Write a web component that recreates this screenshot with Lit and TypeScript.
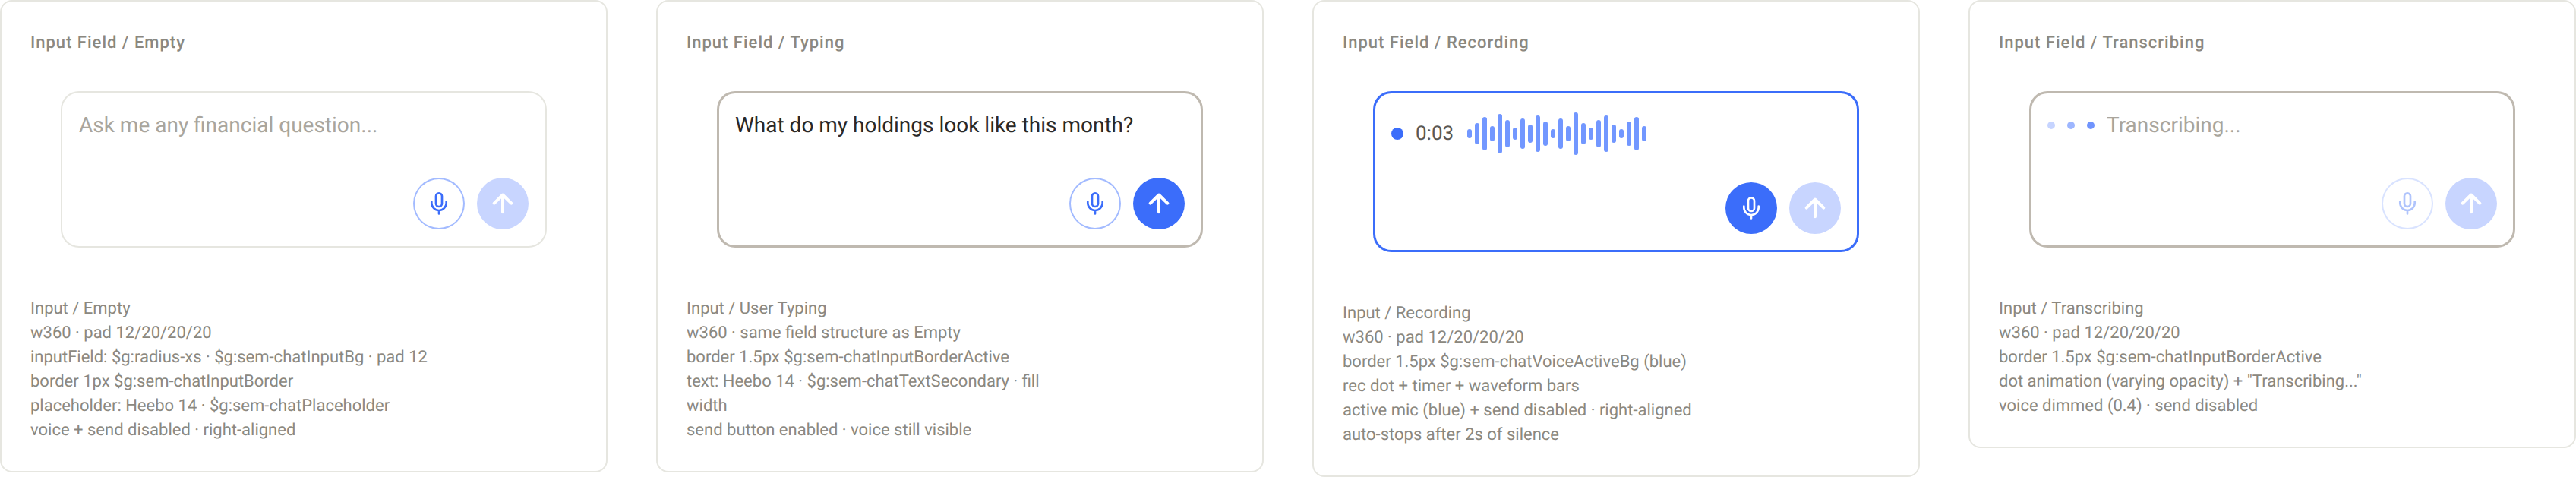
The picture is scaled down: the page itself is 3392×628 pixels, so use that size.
import { LitElement, html, css, svg } from "lit";
import { customElement, property } from "lit/decorators.js";
import { classMap } from "lit/directives/class-map.js";

type FieldState = "empty" | "typing" | "recording" | "transcribing";

interface Spec {
  state: FieldState;
  title: string;
  notes: string[];
}

const SPECS: Spec[] = [
  {
    state: "empty",
    title: "Input Field / Empty",
    notes: [
      "Input / Empty",
      "w360 · pad 12/20/20/20",
      "inputField: $g:radius-xs · $g:sem-chatInputBg · pad 12",
      "border 1px $g:sem-chatInputBorder",
      "placeholder: Heebo 14 · $g:sem-chatPlaceholder",
      "voice + send disabled · right-aligned",
    ],
  },
  {
    state: "typing",
    title: "Input Field / Typing",
    notes: [
      "Input / User Typing",
      "w360 · same field structure as Empty",
      "border 1.5px $g:sem-chatInputBorderActive",
      "text: Heebo 14 · $g:sem-chatTextSecondary · fill\nwidth",
      "send button enabled · voice still visible",
    ],
  },
  {
    state: "recording",
    title: "Input Field / Recording",
    notes: [
      "Input / Recording",
      "w360 · pad 12/20/20/20",
      "border 1.5px $g:sem-chatVoiceActiveBg (blue)",
      "rec dot + timer + waveform bars",
      "active mic (blue) + send disabled · right-aligned",
      "auto-stops after 2s of silence",
    ],
  },
  {
    state: "transcribing",
    title: "Input Field / Transcribing",
    notes: [
      "Input / Transcribing",
      "w360 · pad 12/20/20/20",
      "border 1.5px $g:sem-chatInputBorderActive",
      'dot animation (varying opacity) + "Transcribing..."',
      "voice dimmed (0.4) · send disabled",
    ],
  },
];

const WAVE = [12, 28, 44, 20, 52, 36, 16, 40, 24, 48, 32, 12, 40, 20, 56, 28, 16, 36, 48, 24, 12, 32, 44, 20];

const micIcon = svg`
  <svg class="icon" viewBox="0 0 32 32" aria-hidden="true">
    <rect x="12" y="2.3" width="8" height="17.7" rx="4"></rect>
    <path d="M6.3 13.6v1.7a9.7 9.7 0 0 0 19.4 0v-1.7M16 25v4.4"></path>
  </svg>`;

const arrowIcon = svg`
  <svg class="icon arrow" viewBox="0 0 32 32" aria-hidden="true">
    <path d="M16 27.3V4.5M4.7 15.7L16 4.5l11.3 11.2"></path>
  </svg>`;

@customElement("chat-input")
export class ChatInput extends LitElement {
  @property() state: FieldState = "empty";

  static styles = css`
    :host {
      display: block;
    }
    .field {
      box-sizing: border-box;
      display: flex;
      flex-direction: column;
      gap: 32px;
      padding: 24px;
      border-radius: 24px;
      background: #ffffff;
      box-shadow: inset 0 0 0 2px #e6e6e0;
    }
    .field.active {
      box-shadow: inset 0 0 0 3px #bfb9b0;
    }
    .field.recording {
      box-shadow: inset 0 0 0 3px #3b6dfa;
    }
    .body {
      display: flex;
      align-items: flex-start;
      min-height: 58px;
    }
    .text {
      display: block;
      flex: 1;
      min-width: 0;
      box-sizing: border-box;
      height: 42px;
      margin: 0;
      padding: 0;
      border: 0;
      outline: 0;
      background: none;
      font: 400 28px/42px Roboto, sans-serif;
      text-rendering: geometricPrecision;
      color: #2a2826;
    }
    .text::placeholder {
      color: #a9a59c;
      opacity: 1;
    }
    .status {
      display: flex;
      align-items: center;
      gap: 16px;
      height: 42px;
      font: 400 28px/42px Roboto, sans-serif;
      color: #a9a59c;
    }
    .status.rec {
      height: 64px;
      font-size: 26px;
      color: #5c5853;
    }
    .rec-dot {
      width: 16px;
      height: 16px;
      border-radius: 50%;
      background: #3b6dfa;
    }
    .time {
      min-width: 52px;
    }
    .wave {
      display: flex;
      align-items: center;
      gap: 4px;
    }
    .bar {
      width: 6px;
      border-radius: 3px;
      background: #7297ff;
    }
    .dots {
      display: flex;
      gap: 16px;
    }
    .dot {
      width: 10px;
      height: 10px;
      border-radius: 50%;
      background: #c6d4ff;
    }
    .dot.mid {
      background: #9db6ff;
    }
    .dot.strong {
      background: #7094fd;
    }
    .actions {
      display: flex;
      justify-content: flex-end;
      gap: 16px;
    }
    .btn {
      display: grid;
      place-items: center;
      width: 68px;
      height: 68px;
      padding: 0;
      border: 0;
      border-radius: 50%;
      background: #3b6dfa;
      color: #ffffff;
    }
    .btn.voice {
      background: #ffffff;
      color: #3b6dfa;
      box-shadow: inset 0 0 0 2px #a3bbff;
    }
    .btn.voice.on {
      background: #3b6dfa;
      color: #ffffff;
      box-shadow: none;
    }
    .btn.voice.dim {
      opacity: 0.4;
    }
    .btn.send:disabled {
      background: #c8d5ff;
    }
    .icon {
      width: 32px;
      height: 32px;
      fill: none;
      stroke: currentColor;
      stroke-width: 2.67;
      stroke-linecap: round;
      stroke-linejoin: round;
    }
    .icon.arrow {
      stroke-width: 4;
    }
  `;

  private renderBody() {
    switch (this.state) {
      case "recording":
        return html`
          <div class="status rec" role="timer">
            <span class="rec-dot"></span>
            <span class="time">0:03</span>
            <span class="wave" aria-hidden="true">
              ${WAVE.map((h) => html`<span class="bar" style="height:${h}px"></span>`)}
            </span>
          </div>
        `;
      case "transcribing":
        return html`
          <div class="status" role="status">
            <span class="dots" aria-hidden="true">
              <span class="dot"></span><span class="dot mid"></span><span class="dot strong"></span>
            </span>
            <span>Transcribing...</span>
          </div>
        `;
      default:
        return html`
          <input
            class="text"
            type="text"
            aria-label="Message"
            placeholder="Ask me any financial question..."
            .value=${this.state === "typing" ? "What do my holdings look like this month?" : ""}
          />
        `;
    }
  }

  render() {
    const s = this.state;
    return html`
      <div class=${classMap({ field: true, active: s === "typing" || s === "transcribing", recording: s === "recording" })}>
        <div class="body">${this.renderBody()}</div>
        <div class="actions">
          <button
            type="button"
            aria-label="Voice input"
            class=${classMap({ btn: true, voice: true, on: s === "recording", dim: s === "transcribing" })}
          >${micIcon}</button>
          <button type="button" aria-label="Send" class="btn send" ?disabled=${s !== "typing"}>${arrowIcon}</button>
        </div>
      </div>
    `;
  }
}

@customElement("app-root")
export class AppRoot extends LitElement {
  static styles = css`
    :host {
      display: block;
      background: #ffffff;
      font-family: Roboto, sans-serif;
      text-rendering: geometricPrecision;
    }
    .board {
      display: grid;
      grid-template-columns: repeat(4, minmax(0, 1fr));
      align-items: start;
      gap: 64px;
    }
    .card {
      box-sizing: border-box;
      display: flex;
      flex-direction: column;
      gap: 24px;
      padding: 39px 38px 37px;
      border: 2px solid #e6e6e0;
      border-radius: 16px;
      background: #ffffff;
    }
    .title {
      margin: 0;
      font-size: 22px;
      line-height: 32px;
      font-weight: 500;
      letter-spacing: 1px;
      color: #8b8880;
    }
    .preview {
      padding: 23px 40px 41px;
    }
    .notes {
      font-size: 22px;
      line-height: 32px;
      color: #8b8880;
    }
    .note {
      margin: 0;
      white-space: pre-line;
    }
  `;

  render() {
    return html`
      <main class="board">
        ${SPECS.map(
          (spec) => html`
            <section class="card">
              <h2 class="title">${spec.title}</h2>
              <div class="preview"><chat-input .state=${spec.state}></chat-input></div>
              <div class="notes">${spec.notes.map((n) => html`<p class="note">${n}</p>`)}</div>
            </section>
          `
        )}
      </main>
    `;
  }
}
